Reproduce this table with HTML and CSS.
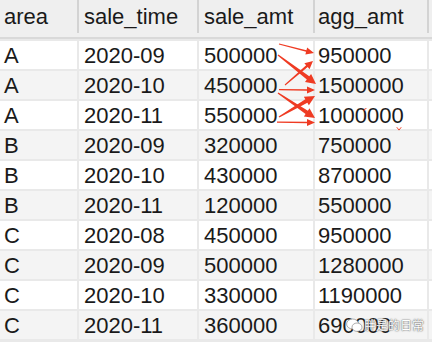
FILE: index.html
```html
<!DOCTYPE html>
<html>
<head>
<meta charset="utf-8">
<link rel="stylesheet" href="styles.css">
</head>
<body>
<div class="sheet">
  <div class="head">
    <div class="hc">area</div>
    <div class="hc">sale_time</div>
    <div class="hc">sale_amt</div>
    <div class="hc">agg_amt</div>
    <div class="hc last"></div>
  </div>
  <div class="grid">
    <div class="c">A</div><div class="c">2020-09</div><div class="c">500000</div><div class="c">950000</div><div class="c"></div>
    <div class="c alt">A</div><div class="c alt">2020-10</div><div class="c alt">450000</div><div class="c alt">1500000</div><div class="c alt"></div>
    <div class="c">A</div><div class="c">2020-11</div><div class="c">550000</div><div class="c">1000000</div><div class="c"></div>
    <div class="c alt">B</div><div class="c alt">2020-09</div><div class="c alt">320000</div><div class="c alt">750000</div><div class="c alt"></div>
    <div class="c">B</div><div class="c">2020-10</div><div class="c">430000</div><div class="c">870000</div><div class="c"></div>
    <div class="c alt">B</div><div class="c alt">2020-11</div><div class="c alt">120000</div><div class="c alt">550000</div><div class="c alt"></div>
    <div class="c">C</div><div class="c">2020-08</div><div class="c">450000</div><div class="c">950000</div><div class="c"></div>
    <div class="c alt">C</div><div class="c alt">2020-09</div><div class="c alt">500000</div><div class="c alt">1280000</div><div class="c alt"></div>
    <div class="c">C</div><div class="c">2020-10</div><div class="c">330000</div><div class="c">1190000</div><div class="c"></div>
    <div class="c alt">C</div><div class="c alt">2020-11</div><div class="c alt">360000</div><div class="c alt">690000</div><div class="c alt"></div>
  </div>

  <svg class="marks" width="432" height="342" viewBox="0 0 432 342">
    <g fill="#ef3b23" stroke="none">
      <polygon points="279.12,43.52 306.46,50.24 307.13,47.62 314,53 305.39,54.4 306.06,51.78 278.88,44.48" />
      <polygon points="278.4,54.44 309.26,76.34 311.1,73.96 316,84 305,81.9 306.84,79.52 277.6,55.56" />
      <polygon points="284.67,84.62 306.15,65.3 304.33,63.17 313,61 309.53,69.25 307.71,67.12 285.33,85.38" />
      <polygon points="279,89 307,89.2 307,86.5 315,90 307,93.5 307,90.8 279,90.2" />
      <polygon points="278.39,92.42 307.83,110.74 309.51,108.25 315,118 303.91,116.55 305.59,114.06 277.61,93.58" />
      <polygon points="278.65,116.4 305.35,99.31 303.84,96.72 315,96 308.88,105.36 307.37,102.77 279.35,117.6" />
      <polygon points="277,121.5 307,121.7 307,119 315,122.5 307,126 307,123.3 277,122.7" />
    </g>
    <g fill="none" stroke="#ef3b23" stroke-width="0.9" stroke-linecap="round">
      <path d="M366 108.5 q-2.2 0 -2 2" />
      <path d="M397 127.5 l2 2.6 l2 -2.6" />
    </g>
  </svg>

  <div class="wm">
    <svg class="wx" width="17" height="15" viewBox="0 0 17 15">
      <ellipse cx="6.6" cy="6" rx="6" ry="5" fill="#fff" stroke="#777" stroke-width="0.6"/>
      <ellipse cx="11" cy="9.2" rx="5" ry="4.2" fill="#fff" stroke="#777" stroke-width="0.6"/>
    </svg>
    <span class="wt">胖是的日常</span>
  </div>
</div>
</body>
</html>
```

FILE: styles.css
```css
html, body {
  margin: 0;
  padding: 0;
  background: #e9e9e9;
}
.sheet {
  position: relative;
  width: 432px;
  height: 342px;
  overflow: hidden;
  font-family: "Liberation Sans", Arial, sans-serif;
  font-size: 22px;
  color: #1a1a1a;
}
.head {
  display: flex;
  align-items: flex-start;
  height: 37px;
  background: #efefef;
  border-bottom: 2px solid #d9d9d9;
}
.hc {
  box-sizing: border-box;
  height: 33px;
  line-height: 34px;
  padding-left: 5px;
  border-right: 2px solid #d3d3d3;
  flex: none;
}
.hc:nth-child(1) { width: 79px; padding-left: 4px; }
.hc:nth-child(2) { width: 120px; }
.hc:nth-child(3) { width: 116px; }
.hc:nth-child(4) { width: 114px; padding-left: 3px; }
.hc.last { flex: 1; border-right: none; }
.grid {
  display: grid;
  grid-template-columns: 77px 118px 114px 112px 1fr;
  grid-auto-rows: 28px;
  gap: 2px;
  padding-top: 2px;
  background: #e9e9e9;
}
.c {
  background: #ffffff;
  line-height: 29px;
  padding-left: 5px;
  white-space: nowrap;
}
.c:nth-child(5n+1) { padding-left: 4px; }
.c:nth-child(5n+4) { padding-left: 3px; }
.c.alt { background: #f4f4f4; }
.marks {
  position: absolute;
  left: 0;
  top: 0;
  pointer-events: none;
}
.wm {
  position: absolute;
  left: 346px;
  top: 317px;
  display: flex;
  align-items: center;
  gap: 1px;
}
.wt {
  font-family: "Noto Sans CJK SC", sans-serif;
  font-size: 12px;
  line-height: 16px;
  color: #ffffff;
  text-shadow: 0 0 1px #555, 0 0 2px #777;
}
```
